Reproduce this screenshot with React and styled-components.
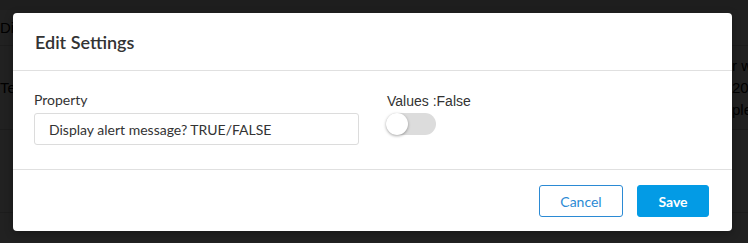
import React from 'react'
import styled, { createGlobalStyle } from 'styled-components'

const GlobalStyle = createGlobalStyle`
  html, body {
    margin: 0;
    padding: 0;
    background: #ffffff;
  }
  body {
    font-family: Lato, "Liberation Sans", Arial, sans-serif;
  }
`

const Page = styled.div`
  position: relative;
  width: 748px;
  height: 243px;
  overflow: hidden;
  background: #ffffff;
`

const TopBar = styled.div`
  height: 10px;
  background: #e4e4e4;
`

const Table = styled.div`
  display: flex;
  flex-direction: column;
`

const Row = styled.div`
  display: grid;
  grid-template-columns: 1fr 16px;
  height: ${props => props.height}px;
  border-bottom: 1px solid #d6d6d6;
  font-family: "Liberation Sans", Arial, sans-serif;
  font-size: 15px;
  color: #000;
`

const Cell = styled.div`
  display: flex;
  flex-direction: column;
  justify-content: center;
  align-items: flex-start;
  line-height: 22px;
  white-space: nowrap;
  overflow: hidden;
`

const Overlay = styled.div`
  position: absolute;
  inset: 0;
  background: rgba(0, 0, 0, 0.87);
`

const Modal = styled.div`
  position: absolute;
  left: 13px;
  top: 13px;
  width: 719px;
  height: 218px;
  background: #ffffff;
  border-radius: 4px;
  display: flex;
  flex-direction: column;
  box-shadow: 0 2px 8px rgba(0, 0, 0, 0.3);
`

const Header = styled.div`
  height: 57px;
  display: flex;
  align-items: center;
  padding: 0 22px;
  border-bottom: 1px solid #e0e0e0;
`

const Title = styled.h4`
  margin: 0;
  font-size: 18px;
  font-weight: 600;
  color: #333;
`

const Body = styled.div`
  box-sizing: border-box;
  height: 99px;
  padding: 22px 21px 0 21px;
  display: grid;
  grid-template-columns: 325px 1fr;
  column-gap: 27px;
  border-bottom: 1px solid #e0e0e0;
`

const Field = styled.div`
  display: flex;
  flex-direction: column;
  align-items: flex-start;
`

const Label = styled.label`
  font-family: ${props => (props.arial ? '"Liberation Sans", Arial, sans-serif' : 'Lato, sans-serif')};
  font-size: 14px;
  line-height: 17px;
  color: #333;
  margin-top: ${props => (props.arial ? 0 : -2)}px;
  margin-bottom: ${props => (props.arial ? 3 : 5)}px;
  padding-left: ${props => props.indent || 0}px;
`

const Input = styled.div`
  box-sizing: border-box;
  width: 100%;
  height: 32px;
  border: 1px solid #dcdcdc;
  border-radius: 3px;
  padding: 0 14px;
  display: flex;
  align-items: center;
  font-size: 14px;
  color: #333;
`

const Track = styled.div`
  position: relative;
  width: 50px;
  height: 22px;
  border-radius: 11px;
  background: #dcdcdc;
`

const Knob = styled.div`
  position: absolute;
  left: 0;
  top: 0;
  width: 22px;
  height: 22px;
  border-radius: 50%;
  background: #fff;
  box-shadow: 0 1px 3px rgba(0, 0, 0, 0.35);
`

const Footer = styled.div`
  flex: 1;
  display: flex;
  justify-content: flex-end;
  align-items: flex-start;
  gap: 14px;
  padding: 15px 23px 0 0;
`

const Button = styled.button`
  box-sizing: border-box;
  height: 32px;
  width: ${props => props.width}px;
  border-radius: 3px;
  font-family: Lato, sans-serif;
  font-size: 14px;
  font-weight: ${props => (props.primary ? 700 : 400)};
  border: 1px solid ${props => (props.primary ? '#039be5' : '#2b8ad4')};
  background: ${props => (props.primary ? '#039be5' : '#ffffff')};
  color: ${props => (props.primary ? '#ffffff' : '#2b8ad4')};
  cursor: pointer;
`

export default function App() {
  return (
    <>
      <GlobalStyle />
      <Page>
        <TopBar />
        <Table>
          <Row height={35}>
            <Cell>Dis</Cell>
            <Cell />
          </Row>
          <Row height={83}>
            <Cell>Te</Cell>
            <Cell>
              <span>r w</span>
              <span>20</span>
              <span>ple</span>
            </Cell>
          </Row>
          <Row height={82}>
            <Cell />
            <Cell />
          </Row>
        </Table>
        <Overlay />
        <Modal>
          <Header>
            <Title>Edit Settings</Title>
          </Header>
          <Body>
            <Field>
              <Label>Property</Label>
              <Input>Display alert message? TRUE/FALSE</Input>
            </Field>
            <Field>
              <Label arial indent={1}>Values :False</Label>
              <Track>
                <Knob />
              </Track>
            </Field>
          </Body>
          <Footer>
            <Button width={84}>Cancel</Button>
            <Button primary width={72}>Save</Button>
          </Footer>
        </Modal>
      </Page>
    </>
  )
}
